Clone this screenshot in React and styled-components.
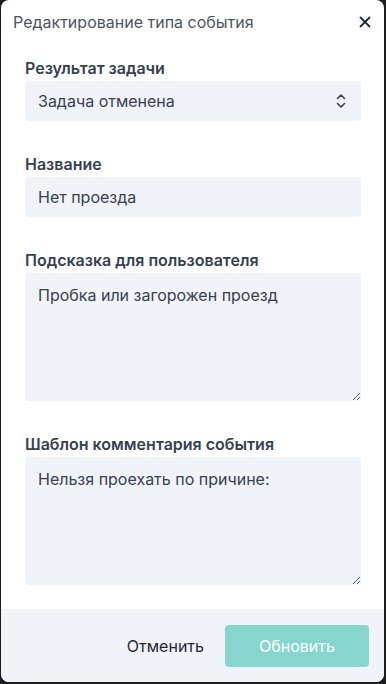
import React from 'react';
import styled, { createGlobalStyle } from 'styled-components';

const Global = createGlobalStyle`
  html, body {
    margin: 0;
    padding: 0;
    background: #1c1c1c;
  }
  * { box-sizing: border-box; }
`;

const Modal = styled.div`
  width: 383px;
  height: 682px;
  margin: 0 2px 2px 1px;
  background: #fff;
  border-radius: 8px;
  overflow: hidden;
  display: flex;
  flex-direction: column;
  font-family: Inter, 'Noto Sans', sans-serif;
`;

const Header = styled.div`
  display: flex;
  align-items: center;
  justify-content: space-between;
  padding: 11px 13px 0 12px;
  height: 32px;
`;

const Title = styled.h2`
  margin: 0;
  font-size: 16px;
  font-weight: 400;
  line-height: 20px;
  color: #4b5563;
`;

const Close = styled.button`
  border: 0;
  background: none;
  padding: 0;
  display: flex;
  color: #1f2937;
  cursor: pointer;
`;

const Body = styled.div`
  flex: 1;
  padding: 26px 23px 0 24px;
  display: flex;
  flex-direction: column;
  gap: 33px;
`;

const Field = styled.div`
  display: flex;
  flex-direction: column;
  gap: 3px;
`;

const Label = styled.label`
  font-size: 16px;
  font-weight: 600;
  line-height: 20px;
  color: #374151;
`;

const Select = styled.div`
  height: 40px;
  background: #f0f3f8;
  border-radius: 4px;
  display: flex;
  align-items: center;
  justify-content: space-between;
  padding: 0 14px 0 13px;
  font-size: 16px;
  color: #374151;
`;

const Input = styled.input`
  height: 40px;
  border: 0;
  outline: none;
  background: #f0f3f8;
  border-radius: 4px;
  padding: 0 13px;
  font: 16px Inter, 'Noto Sans', sans-serif;
  color: #374151;
`;

const TextArea = styled.textarea`
  height: 128px;
  border: 0;
  outline: none;
  background: #f0f3f8;
  border-radius: 4px;
  padding: 12px 13px;
  font: 16px/20px Inter, 'Noto Sans', sans-serif;
  color: #374151;
  resize: vertical;
`;

const Footer = styled.div`
  height: 73px;
  background: #f0f3f8;
  display: flex;
  align-items: center;
  justify-content: flex-end;
  gap: 21px;
  padding: 0 15px 0 0;
`;

const GhostButton = styled.button`
  border: 0;
  background: none;
  font: 16px Inter, 'Noto Sans', sans-serif;
  color: #1f2937;
  padding: 0;
  cursor: pointer;
`;

const PrimaryButton = styled.button`
  width: 144px;
  height: 42px;
  border: 0;
  border-radius: 4px;
  background: #86d6cf;
  color: #fff;
  font: 16px Inter, 'Noto Sans', sans-serif;
  cursor: default;
`;

const Chevrons = () => (
  <svg width="12" height="18" viewBox="0 0 12 18" fill="none" stroke="#374151" strokeWidth="1.6" strokeLinecap="round" strokeLinejoin="round">
    <path d="M2.5 6.5 6 3l3.5 3.5" />
    <path d="M2.5 11.5 6 15l3.5-3.5" />
  </svg>
);

const CloseIcon = () => (
  <svg width="12" height="12" viewBox="0 0 12 12" stroke="currentColor" strokeWidth="1.8" strokeLinecap="round">
    <path d="M1.5 1.5l9 9M10.5 1.5l-9 9" />
  </svg>
);

export default function App() {
  return (
    <>
      <Global />
      <Modal>
        <Header>
          <Title>Редактирование типа события</Title>
          <Close aria-label="Закрыть"><CloseIcon /></Close>
        </Header>
        <Body>
          <Field>
            <Label>Результат задачи</Label>
            <Select>
              <span>Задача отменена</span>
              <Chevrons />
            </Select>
          </Field>
          <Field>
            <Label>Название</Label>
            <Input defaultValue="Нет проезда" />
          </Field>
          <Field>
            <Label>Подсказка для пользователя</Label>
            <TextArea defaultValue="Пробка или загорожен проезд" />
          </Field>
          <Field>
            <Label>Шаблон комментария события</Label>
            <TextArea defaultValue="Нельзя проехать по причине:" />
          </Field>
        </Body>
        <Footer>
          <GhostButton>Отменить</GhostButton>
          <PrimaryButton disabled>Обновить</PrimaryButton>
        </Footer>
      </Modal>
    </>
  );
}
